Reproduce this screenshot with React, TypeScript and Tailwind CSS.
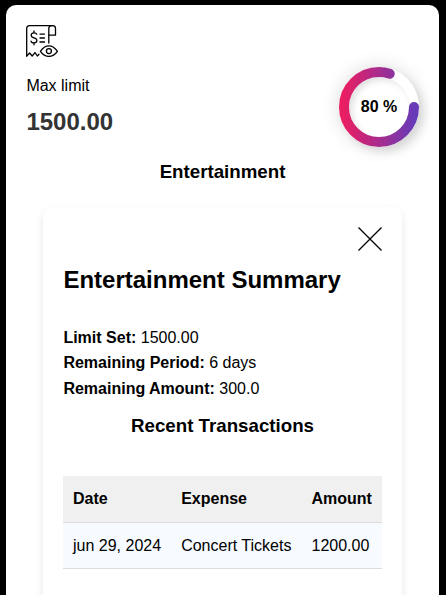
const info = [
  { label: 'Limit Set:', value: '1500.00' },
  { label: 'Remaining Period:', value: '6 days' },
  { label: 'Remaining Amount:', value: '300.0' },
];

const transactions = [{ date: 'jun 29, 2024', expense: 'Concert Tickets', amount: '1200.00' }];

function BillIcon() {
  return (
    <svg className="block size-8" viewBox="0 0 32 32" fill="none" stroke="#000" strokeWidth="1.3" strokeLinecap="round" strokeLinejoin="round">
      <path d="M0.7 31V3.6Q0.7 0.7 3.7 0.7H26.5Q29.5 0.7 29.5 3.4V10.2H22.8" />
      <path d="M26 0.7Q22.8 0.7 22.8 3.6V18" />
      <path d="M0.7 31L3.6 28L6.2 31L9 27.6L11.4 31L13 29.3" />
      <path d="M10.8 9.2Q10.3 7.8 8 7.8Q5.2 7.8 5.2 10.3Q5.2 12.1 8 12.9Q10.9 13.7 10.9 15.6Q10.9 18 8 18Q5.4 18 5 16.2M8 6V7.8M8 18V19.8" />
      <path d="M14 9.1H18.5M14 13H18.5M14 17H18.5" />
      <path d="M14.4 26.3Q18 20.8 22.9 20.8T31.4 26.3Q27.8 31.4 22.9 31.4T14.4 26.3Z" />
      <circle cx="22.9" cy="26.1" r="2.5" />
    </svg>
  );
}

function Progress() {
  return (
    <div className="relative size-20 rounded-full p-2.5 shadow-[6px_6px_10px_-1px_rgba(0,0,0,0.1),0_0_18px_rgba(0,0,0,0.15)]">
      <div className="absolute inset-0 rounded-full bg-white" />
      <div className="relative flex size-[60px] items-center justify-center rounded-full font-bold shadow-[inset_4px_4px_6px_-1px_rgba(0,0,0,0.12),inset_-4px_-4px_6px_-1px_rgba(255,255,255,0.7),0.5px_0.5px_0_rgba(0,0,0,0.08)]">
        80 %
      </div>
      <svg className="absolute inset-0 size-20" viewBox="0 0 80 80">
        <defs>
          <linearGradient id="ringColor">
            <stop offset="0%" stopColor="#e91e63" />
            <stop offset="100%" stopColor="#673ab7" />
          </linearGradient>
        </defs>
        <circle cx="40" cy="40" r="35" fill="none" stroke="url(#ringColor)" strokeWidth="10" strokeLinecap="round" pathLength="100" strokeDasharray="80 100" />
      </svg>
    </div>
  );
}

export default function App() {
  return (
    <div className="h-[595px] overflow-hidden bg-black pt-[5px] pr-[7px] pl-1.5 font-['Liberation_Sans',Arial,sans-serif] text-base leading-[25.6px] text-black">
      <main className="h-[700px] rounded-[10px] bg-white p-5">
        <header className="flex h-[122px] justify-between">
          <div className="pl-[0.4px]">
            <BillIcon />
            <p className="mt-4">Max limit</p>
            <p className="mt-[5px] text-2xl leading-[36px] font-bold text-[#333]">1500.00</p>
          </div>
          <div className="pt-[42px]">
            <Progress />
          </div>
        </header>
        <h3 className="mt-[10px] text-center text-[18.72px] leading-[30px] font-bold">Entertainment</h3>
        <section className="mx-[17px] mt-5 h-[500px] rounded-[10px] p-5 shadow-[0_4px_8px_rgba(0,0,0,0.1)]">
          <div className="flex justify-end">
            <svg className="size-6" viewBox="0 0 24 24" stroke="#000" strokeWidth="1.3">
              <path d="M0.5 0.5L23.5 23.5M23.5 0.5L0.5 23.5" />
            </svg>
          </div>
          <h2 className="mt-[10px] pl-[0.4px] text-2xl leading-[38.4px] font-bold">Entertainment Summary</h2>
          <div className="mt-[25.4px] pl-[0.4px]">
            {info.map((item) => (
              <p key={item.label}>
                <strong>{item.label}</strong> {item.value}
              </p>
            ))}
          </div>
          <h3 className="mt-[9.6px] text-center text-[18.72px] leading-[30px] font-bold">Recent Transactions</h3>
          <table className="mt-[35px] w-full border-collapse text-left">
            <thead>
              <tr className="bg-[#f0f0f0]">
                <th className="border-b border-[#ddd] p-2.5">Date</th>
                <th className="border-b border-[#ddd] p-2.5">Expense</th>
                <th className="border-b border-[#ddd] p-2.5">Amount</th>
              </tr>
            </thead>
            <tbody>
              {transactions.map((t) => (
                <tr key={t.date} className="bg-[#f7fbff]">
                  <td className="border-b border-[#ddd] p-2.5">{t.date}</td>
                  <td className="border-b border-[#ddd] p-2.5">{t.expense}</td>
                  <td className="border-b border-[#ddd] p-2.5">{t.amount}</td>
                </tr>
              ))}
            </tbody>
          </table>
        </section>
      </main>
    </div>
  );
}
